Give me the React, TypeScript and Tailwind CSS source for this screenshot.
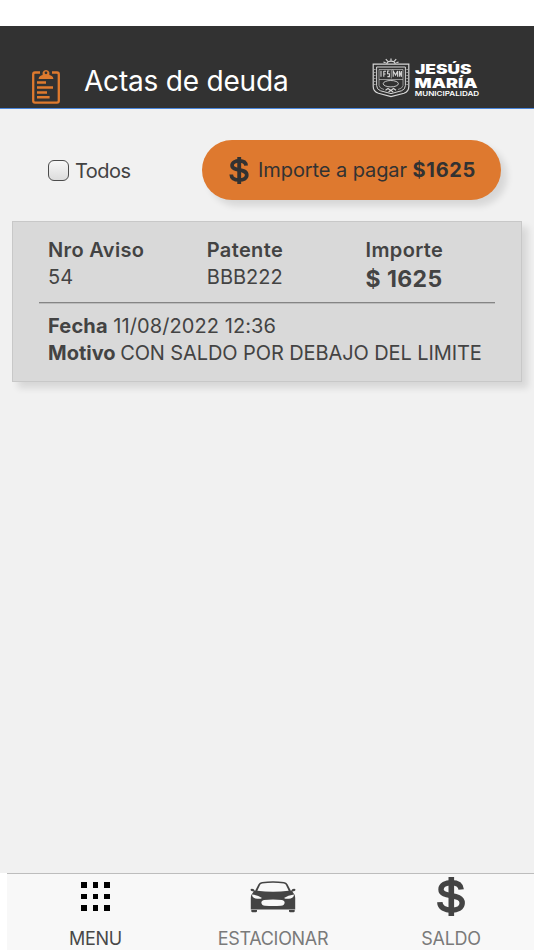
import type { ReactNode } from "react";

const acta = {
  aviso: "54",
  patente: "BBB222",
  importe: 1625,
  fecha: "11/08/2022 12:36",
  motivo: "CON SALDO POR DEBAJO DEL LIMITE",
};

function ClipboardIcon() {
  return (
    <svg width="28" height="35" viewBox="0 0 28 35" fill="none" stroke="#df7a2e" strokeLinejoin="round">
      <path d="M8 3.5H3Q1.2 3.5 1.2 5.4V31.7Q1.2 33.6 3 33.6H25Q26.8 33.6 26.8 31.7V5.4Q26.8 3.5 25 3.5H20" strokeWidth="2.3" />
      <path d="M5 13.6H14M5 18.6H21M5 23.4H15M5 28.3H17.6" strokeWidth="2.5" />
      <path
        fillRule="evenodd"
        d="M6.6 10C6.8 7.4 8.6 6.6 10.6 6V3.6A3.5 3.5 0 0 1 17.4 3.6V6C19.4 6.6 21.2 7.4 21.4 10ZM14 2.4A1.4 1.4 0 1 0 14 5.2A1.4 1.4 0 1 0 14 2.4Z"
        fill="#df7a2e"
        stroke="none"
      />
    </svg>
  );
}

function MunicipalityLogo() {
  return (
    <svg width="110" height="42" viewBox="0 0 110 42" fill="none" stroke="#d6d6d6">
      <path d="M1.2 6.2H36.8V28.5Q36.8 33.5 32 35.3L19 38.6L6.5 35.3Q1.2 33.5 1.2 28.5Z" strokeWidth="1.2" />
      <path d="M4.6 9H33.4V27.5Q33.4 31.3 29.5 32.8L19 35.6L8.5 32.8Q4.6 31.3 4.6 27.5Z" strokeWidth="1" />
      <path d="M2.9 11V28M35.1 11V28" strokeWidth="1" strokeDasharray="1 2" />
      <path d="M7 21.5V11.5H31V21.5ZM7 21.5V27.5Q7.5 30.5 12 31.5M31 21.5V27.5Q30.5 30.5 26 31.5M19.3 12V20.5" strokeWidth=".8" opacity=".75" />
      <path d="M9 12.8V18.8M11.8 13V18.8M11.8 13.3H14M11.8 16H13.6M17.4 13H15.6V15.8H17.4V18.6H15.4M21.2 18.8V13L23.6 17L25.6 13V18.8M27.4 18.8V13L29.4 18.8V13" strokeWidth="1.1" />
      <ellipse cx="18.8" cy="25.7" rx="7.6" ry="3.2" strokeWidth=".9" />
      <path d="M13.5 32.3L16 30.5L18.8 32.5L21.5 30.5L24 32.3M16.5 34L18.8 32.5L21.2 34" strokeWidth="1.1" />
      <path d="M14.8 6Q15.2 3.2 19 3.2Q22.8 3.2 23.2 6M19 2.7V.4M15.6 3.2L13.8 1.2M22.4 3.2L24.2 1.2M13.7 4.8L11.4 4M24.3 4.8L26.6 4" strokeWidth="1.2" />
      <g fill="#fff" stroke="none" fontFamily="Inter, sans-serif" fontWeight="900">
        <text x="43" y="16.4" fontSize="12.9" textLength="56.5" lengthAdjust="spacingAndGlyphs">JESÚS</text>
        <text x="42.6" y="30" fontSize="13.6" textLength="63" lengthAdjust="spacingAndGlyphs">MARÍA</text>
        <text x="42.8" y="38.3" fontSize="6.4" fontWeight="600" textLength="64.4" lengthAdjust="spacingAndGlyphs">MUNICIPALIDAD</text>
      </g>
    </svg>
  );
}

function DollarIcon({ className }: { className: string }) {
  return (
    <svg className={className} viewBox="0 0 28 39" fill="none" stroke="currentColor">
      <path d="M24.2 12.5C23.8 7.8 20 5.7 14.5 5.7C8.7 5.7 4 8 4 12.4C4 21.5 25.2 15.5 25.2 26C25.2 31 20.2 33.2 14.5 33.2C8 33.2 3 30.8 2.8 25.2" strokeWidth="5.4" />
      <path d="M14.3 0V39" strokeWidth="5.6" />
    </svg>
  );
}

function GridIcon() {
  return (
    <div className="grid grid-cols-3 gap-x-[6px] gap-y-[6px]">
      {Array.from({ length: 9 }, (_, i) => (
        <span key={i} className="h-[5.5px] w-[5.5px] bg-black" />
      ))}
    </div>
  );
}

function CarIcon() {
  return (
    <svg width="46" height="32" viewBox="0 0 46 32">
      <path
        fill="#444"
        d="M8.5 3.2Q9.5 1.3 12 1Q23 -.4 34 1Q36.5 1.3 37.5 3.2L41 10Q42 7.7 44 7.7Q45.5 7.8 45.5 9Q45.3 10.2 42.3 10.4L44.4 13.5Q45.2 14.8 45.2 17V28.5H.8V17Q.8 14.8 1.6 13.5L3.7 10.4Q.7 10.2 .5 9Q.5 7.8 2 7.7Q4 7.7 5 10Z"
      />
      <path fill="#444" d="M1.3 29H7V30.2Q7 31.3 5.8 31.3H2.5Q1.3 31.3 1.3 30.2ZM39 29H44.7V30.2Q44.7 31.3 43.5 31.3H40.2Q39 31.3 39 30.2Z" />
      <path fill="#f8f8f8" d="M10.3 3.5Q10.9 2.6 12.2 2.4Q23 1 33.8 2.4Q35.1 2.6 35.7 3.5L38.7 9.7Q23 11.7 7.3 9.7Z" />
      <path fill="#f8f8f8" d="M2 13.5Q8 14 12 17Q10 18.5 5.3 17.4Q2 16.4 2 13.5ZM44 13.5Q38 14 34 17Q36 18.5 40.7 17.4Q44 16.4 44 13.5Z" />
      <path fill="#f8f8f8" d="M14 18.9Q23 17.9 32 18.9Q35 19.8 34.6 22Q34.2 24.5 31 24.8Q23 25.3 15 24.8Q11.8 24.5 11.4 22Q11 19.8 14 18.9Z" />
    </svg>
  );
}

function Field({ label, children }: { label: string; children: ReactNode }) {
  return (
    <div className="w-[158.8px] shrink-0">
      <p className="font-semibold tracking-[0.35px]">{label}</p>
      {children}
    </div>
  );
}

export default function App() {
  return (
    <div className="flex h-[950px] w-full flex-col overflow-hidden whitespace-nowrap bg-[#f1f1f1] font-['Inter',sans-serif] text-[20px] leading-[27px] text-[#434343]">
      <div className="h-[26px] shrink-0 bg-white" />
      <header className="flex h-[83px] shrink-0 items-end border-b border-[#4a86dc] bg-[#323232] pl-8">
        <div className="mb-1">
          <ClipboardIcon />
        </div>
        <h1 className="mb-[9px] ml-6 w-[288px] text-[28px] leading-9 tracking-[-0.2px] text-white">Actas de deuda</h1>
        <div className="mb-2">
          <MunicipalityLogo />
        </div>
      </header>

      <main className="flex-1">
        <div className="flex items-center justify-between pt-[31px] pr-[33px] pl-12">
          <label className="flex items-center gap-[6px]">
            <input
              type="checkbox"
              className="h-[21px] w-[21px] appearance-none rounded-[6px] border border-[#4c4c4c] bg-gradient-to-b from-[#f8f8f8] to-[#dcdcdc]"
            />
            <span className="pt-[2px] tracking-[-0.5px]">Todos</span>
          </label>
          <button className="flex h-[60px] w-[299px] items-center rounded-full bg-[#de792f] pl-[27px] text-[#323232] shadow-[6px_6px_7px_rgba(0,0,0,0.11)]">
            <DollarIcon className="h-[27px] w-5" />
            <span className="ml-[9px] tracking-[-0.08px]">
              Importe a pagar <b className="font-bold tracking-[0.7px]">${acta.importe}</b>
            </span>
          </button>
        </div>

        <section className="mt-[21px] mr-3 ml-3 h-[161px] border border-[#c8c8c8] bg-[#d9d9d9] px-[26px] pt-[15px] shadow-[6px_6px_7px_rgba(0,0,0,0.11)]">
          <div className="flex h-[66px] border-b border-[#858585] pl-[9px] shadow-[0_1px_0_#bcbcbc]">
            <Field label="Nro Aviso">{acta.aviso}</Field>
            <Field label="Patente">{acta.patente}</Field>
            <Field label="Importe">
              <p className="pt-[2px] text-[23px] font-bold tracking-[0.4px]">$ {acta.importe}</p>
            </Field>
          </div>
          <div className="pt-[10px] pl-[9px]">
            <p>
              <b className="font-bold tracking-[0.15px]">Fecha</b> <span className="tracking-[0.08px]">{acta.fecha}</span>
            </p>
            <p>
              <b className="font-bold">Motivo</b> <span className="-ml-px tracking-[-0.1px]">{acta.motivo}</span>
            </p>
          </div>
        </section>
      </main>

      <footer className="flex h-[77px] shrink-0 bg-white pl-[7px] text-[18px] leading-6">
        <nav className="grid flex-1 grid-cols-[177px_178px_178px] border-t border-[#bdbdbd] bg-[#f8f8f8] tracking-[-0.3px] text-[#7a7a7a]">
          <a className="flex flex-col items-center text-[#484848]">
            <span className="flex h-[53px] items-center pb-2">
              <GridIcon />
            </span>
            MENU
          </a>
          <a className="flex flex-col items-center">
            <span className="flex h-[53px] items-center pb-2">
              <CarIcon />
            </span>
            ESTACIONAR
          </a>
          <a className="flex flex-col items-center">
            <span className="flex h-[53px] items-center pb-2 text-[#444]">
              <DollarIcon className="h-[39px] w-7" />
            </span>
            SALDO
          </a>
        </nav>
      </footer>
    </div>
  );
}
